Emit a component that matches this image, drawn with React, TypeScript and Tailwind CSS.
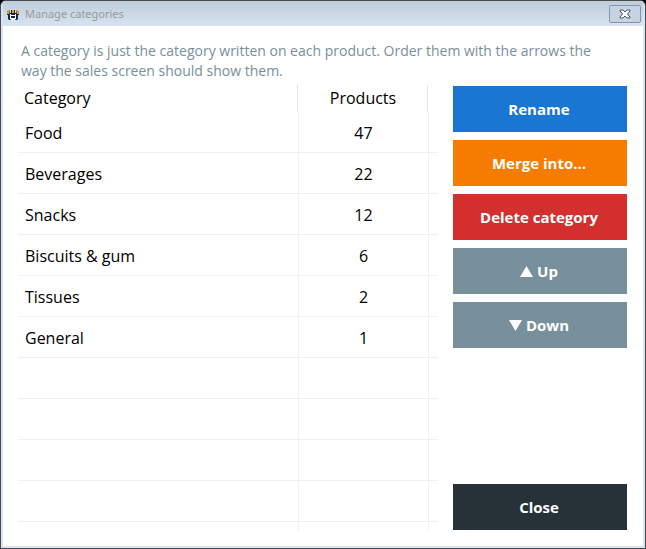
import React from 'react';

interface Category {
  name: string;
  products: number;
}

const categories: Category[] = [
  { name: 'Food', products: 47 },
  { name: 'Beverages', products: 22 },
  { name: 'Snacks', products: 12 },
  { name: 'Biscuits & gum', products: 6 },
  { name: 'Tissues', products: 2 },
  { name: 'General', products: 1 },
];

const EMPTY_ROWS = 4;

const StoreIcon: React.FC = () => (
  <svg width="12" height="12" viewBox="0 0 12 12" aria-hidden="true">
    <path d="M1 1h10l1 4v1H0V5z" fill="#12294a" />
    <path d="M1 6h10v4l-1 1H2l-1-1z" fill="#12294a" />
    <path d="M1 1h2L2 5H0zM5 1h2v3H5zM9 1h2l1 4h-2z" fill="#f2a024" />
    <path d="M3 1h1v3H3zM8 1h1v3H8z" fill="#c9d5e2" />
    <path d="M3 5h6v5l-3 2-3-2z" fill="#fff" />
    <path d="M4 5h4v1H4zM4 7h4v2H4z" fill="#12294a" />
  </svg>
);

const CloseIcon: React.FC = () => (
  <svg width="12" height="10" viewBox="0 0 12 10" aria-hidden="true">
    <path
      d="M1 1h3l2 2 2-2h3v1L8.500 5 11 8v1H8L6 7 4 9H1V8l2.500-3L1 2z"
      fill="#fff"
      stroke="#4c5465"
    />
  </svg>
);

interface ActionButtonProps {
  className: string;
  children: React.ReactNode;
}

const ActionButton: React.FC<ActionButtonProps> = ({ className, children }) => (
  <button
    type="button"
    className={`flex h-[46px] w-full shrink-0 items-center justify-center gap-1 pr-0.5 text-[15px] font-bold text-white ${className}`}
  >
    {children}
  </button>
);

const App: React.FC = () => {
  return (
    <div className="min-h-screen bg-black font-['Open_Sans','Noto_Sans',sans-serif]">
      <div className="flex min-h-screen flex-col rounded-t-md border border-[#4b4a4c] bg-[#d9e5f2] px-0.5 pb-0.5">
        <header className="flex h-[25px] items-center justify-between bg-linear-to-b from-[#bfcddb] to-[#d6e3f1] pr-0.5 pl-1">
          <div className="flex items-center gap-1.5 pt-0.5">
            <StoreIcon />
            <h1 className="font-['Noto_Sans',sans-serif] text-[11px] text-[#999999]">Manage categories</h1>
          </div>
          <button
            type="button"
            aria-label="Close window"
            className="flex h-[18px] w-8 items-center justify-center rounded-xs border border-[#8594ac] bg-[#c5d3e3]"
          >
            <CloseIcon />
          </button>
        </header>

        <main className="flex flex-1 flex-col bg-white py-[15px] pr-4 pl-[15px]">
          <p className="pr-8 pl-[3px] text-[14px] leading-5 text-[#78909c]">
            A category is just the category written on each product. Order them with the arrows the
            way the sales screen should show them.
          </p>

          <div className="mt-1 flex flex-1 gap-[15px]">
            <div className="flex flex-1 flex-col">
              <table className="w-full table-fixed border-separate border-spacing-0 text-[16px] text-black">
                <colgroup>
                  <col />
                  <col className="w-[130px]" />
                  <col className="w-[9px]" />
                </colgroup>
                <thead>
                  <tr className="h-[27px]">
                    <th className="p-0 pr-px text-left font-normal">
                      <div className="border-r border-[#e5e5e5] pl-1.5 leading-[27px]">Category</div>
                    </th>
                    <th className="p-0 pr-px font-normal">
                      <div className="border-r border-[#e5e5e5] leading-[27px]">Products</div>
                    </th>
                    <td />
                  </tr>
                </thead>
                <tbody>
                  {categories.map((category) => (
                    <tr key={category.name} className="h-[41px]">
                      <td className="border-r border-b border-[#f0f0f0] p-0 pt-0.5 pl-[7px]">{category.name}</td>
                      <td className="border-r border-b border-[#f0f0f0] p-0 pt-0.5 text-center">{category.products}</td>
                      <td className="border-b border-[#f0f0f0] p-0" />
                    </tr>
                  ))}
                  {Array.from({ length: EMPTY_ROWS }, (_, i) => (
                    <tr key={i} className="h-[41px]">
                      <td className="border-r border-b border-[#f0f0f0] p-0" />
                      <td className="border-r border-b border-[#f0f0f0] p-0" />
                      <td className="border-b border-[#f0f0f0] p-0" />
                    </tr>
                  ))}
                </tbody>
              </table>
              <div className="flex min-h-2 flex-1">
                <div className="flex-1 border-r border-[#f0f0f0]" />
                <div className="w-[130px] border-r border-[#f0f0f0]" />
                <div className="w-[9px]" />
              </div>
            </div>

            <div className="flex w-[174px] flex-col gap-2 py-px">
              <ActionButton className="bg-[#1976d2]">Rename</ActionButton>
              <ActionButton className="bg-[#f57c00]">Merge into...</ActionButton>
              <ActionButton className="bg-[#d32f2f]">Delete category</ActionButton>
              <ActionButton className="bg-[#78909c]">
                <svg width="13" height="11" viewBox="0 0 13 11" fill="currentColor" aria-hidden="true">
                  <path d="M6.500 0L13 11H0z" />
                </svg>
                Up
              </ActionButton>
              <ActionButton className="bg-[#78909c]">
                <svg width="13" height="11" viewBox="0 0 13 11" fill="currentColor" aria-hidden="true">
                  <path d="M0 0h13L6.500 11z" />
                </svg>
                Down
              </ActionButton>
              <ActionButton className="mt-auto bg-[#263238]">Close</ActionButton>
            </div>
          </div>
        </main>
      </div>
    </div>
  );
};

export default App;
